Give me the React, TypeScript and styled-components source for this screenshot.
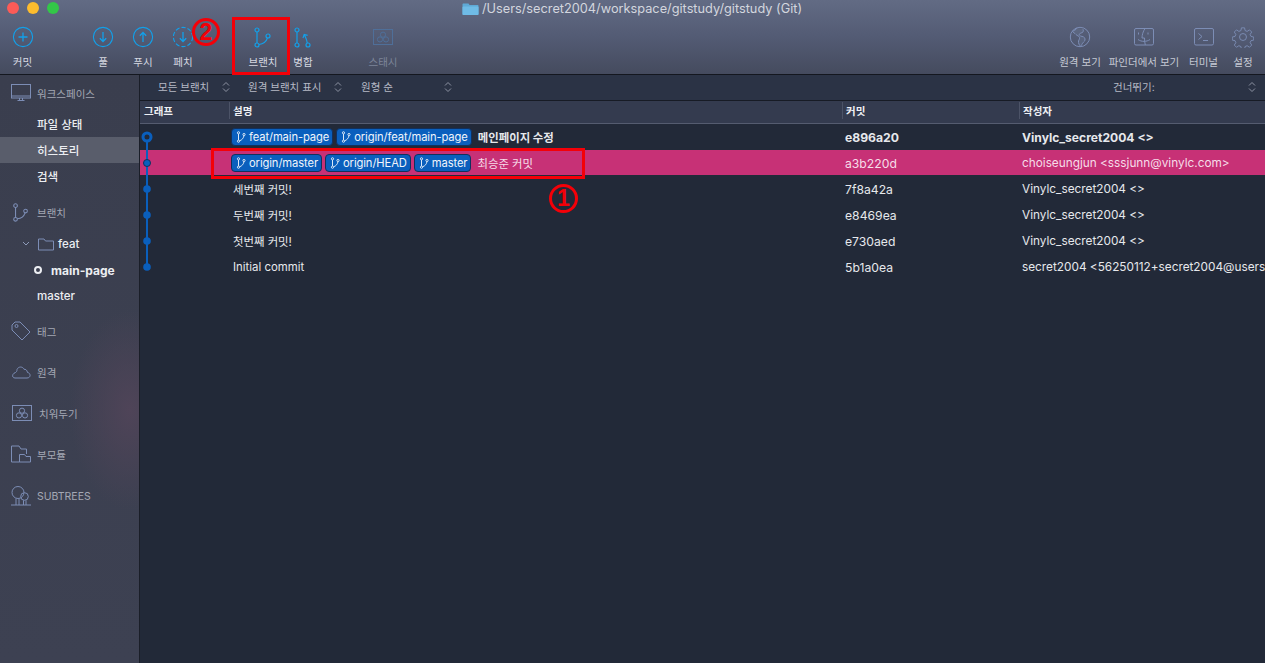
import React from 'react'
import styled, { createGlobalStyle } from 'styled-components'

const FONT = `"Inter", "Noto Sans CJK KR", "Liberation Sans", sans-serif`

const Global = createGlobalStyle`
  html, body { margin: 0; padding: 0; height: 100%; overflow: hidden; background: #222938; }
  * { box-sizing: border-box; }
  body { font-family: ${FONT}; }
`

const Window = styled.div`
  position: relative;
  width: 1265px;
  height: 663px;
  display: flex;
  flex-direction: column;
  overflow: hidden;
`

/* ---------- title + toolbar ---------- */
const Chrome = styled.header`
  height: 75px;
  flex: none;
  background: linear-gradient(#626b84 0%, #535b74 50%, #454b5e 100%);
  border-bottom: 1px solid #14171f;
  display: flex;
  flex-direction: column;
`
const TitleBar = styled.div`
  height: 18px;
  display: flex;
  align-items: center;
  position: relative;
  padding: 0 0 2px 7px;
  gap: 8px;
`
const Light = styled.span<{ $c: string }>`
  width: 12px;
  height: 12px;
  border-radius: 50%;
  background: ${p => p.$c};
`
const Title = styled.div`
  position: absolute;
  left: 462px;
  top: 0;
  height: 17px;
  display: flex;
  align-items: center;
  gap: 3px;
  font-size: 12.75px;
  color: #d3d6de;
  white-space: nowrap;
`
const Toolbar = styled.div`
  flex: 1;
  display: flex;
  align-items: flex-start;
  padding: 8px 4px 0 0;
`
const ToolGroup = styled.div<{ $w: number }>`
  width: ${p => p.$w}px;
  flex: none;
  display: flex;
  justify-content: center;
`
const Tool = styled.div<{ $w?: number; $dim?: boolean; $grey?: boolean }>`
  width: ${p => p.$w ?? 40}px;
  flex: none;
  display: flex;
  flex-direction: column;
  align-items: center;
  gap: 8px;
  font-size: 10.5px;
  line-height: 14px;
  white-space: nowrap;
  color: ${p => (p.$dim ? '#7d8599' : p.$grey ? '#c6cad4' : '#d5d8e0')};
  svg { display: block; height: 22px; }
`
const Spacer = styled.div`
  flex: 1;
`

/* ---------- body ---------- */
const Body = styled.div`
  flex: 1;
  min-height: 0;
  display: flex;
`
const Sidebar = styled.aside`
  width: 140px;
  flex: none;
  background:
    radial-gradient(60px 100px at 130px 335px, #4f4458 0%, rgba(79, 68, 88, 0) 100%),
    linear-gradient(#3a3e4e, #3d4152);
  border-right: 1px solid #1a1e28;
  padding-top: 5px;
  display: flex;
  flex-direction: column;
`
const SideHead = styled.div<{ $top?: number }>`
  height: 26px;
  margin-top: ${p => p.$top ?? 0}px;
  display: flex;
  align-items: center;
  gap: 6px;
  padding-left: 11px;
  font-size: 10.5px;
  color: #a4a8b4;
  svg { flex: none; }
`
const SideItem = styled.div<{ $active?: boolean; $bold?: boolean; $pad?: number; $top?: number }>`
  height: 26px;
  margin-top: ${p => p.$top ?? 0}px;
  display: flex;
  align-items: center;
  gap: 4px;
  padding-left: ${p => p.$pad ?? 37}px;
  font-size: ${p => (p.$bold ? 12 : 11.5)}px;
  font-weight: ${p => (p.$bold ? 700 : 500)};
  color: #eceef2;
  background: ${p => (p.$active ? '#595d6b' : 'transparent')};
`
const Ring = styled.span`
  width: 8px;
  height: 8px;
  margin-right: 5px;
  border-radius: 50%;
  border: 2px solid #eceef2;
`

const Main = styled.main`
  flex: 1;
  min-width: 0;
  display: flex;
  flex-direction: column;
  background: #222938;
`
const FilterBar = styled.div`
  height: 26px;
  flex: none;
  padding-bottom: 2px;
  background: #2b3345;
  border-bottom: 1px solid #171b25;
  display: flex;
  align-items: center;
  font-size: 10.5px;
  color: #b6bac6;
`
const Filter = styled.div<{ $w: number; $ml?: number; $mr?: number }>`
  width: ${p => p.$w}px;
  margin-left: ${p => p.$ml ?? 0}px;
  margin-right: ${p => p.$mr ?? 0}px;
  flex: none;
  display: flex;
  align-items: center;
  justify-content: space-between;
`
const Columns = '89px 613px 177px 1fr'
const HeadRow = styled.div`
  height: 23px;
  flex: none;
  display: grid;
  grid-template-columns: ${Columns};
  background: #343b4f;
  border-bottom: 1px solid #555c70;
  font-size: 10.5px;
  font-weight: 700;
  color: #eef0f4;
`
const HeadCell = styled.div<{ $first?: boolean }>`
  display: flex;
  align-items: center;
  padding-left: ${p => (p.$first ? 4 : 3)}px;
  border-left: ${p => (p.$first ? 'none' : '1px solid #4c5367')};
  margin: 1px 0 4px;
`
const Rows = styled.div`
  position: relative;
  flex: 1;
`
const Row = styled.div<{ $sel?: boolean; $bold?: boolean }>`
  height: 26px;
  display: grid;
  grid-template-columns: ${Columns};
  align-items: center;
  border-bottom: 1px solid transparent;
  background: ${p => (p.$sel ? '#c73176' : 'transparent')};
  background-clip: padding-box;
  color: ${p => (p.$sel ? '#f6dde9' : '#e6e8ec')};
  font-size: ${p => (p.$bold ? 12.1 : 11.8)}px;
  font-weight: ${p => (p.$bold ? 700 : 400)};
  white-space: nowrap;
`
const Desc = styled.div`
  display: flex;
  align-items: center;
  gap: 3px;
  padding-left: 2px;
  font-size: 11.4px;
  overflow: hidden;
`
const Plain = styled.span<{ $tagged?: boolean }>`
  margin-left: ${p => (p.$tagged ? 1 : 0)}px;
  padding-left: 2px;
`
const Tag = styled.span`
  height: 18px;
  display: inline-flex;
  align-items: center;
  gap: 3px;
  padding: 0 3px 0 4px;
  border-radius: 4px;
  background: #0a5fbd;
  border: 1px solid #12305c;
  color: #f0f5fb;
  font-size: 11.2px;
  font-weight: 400;
  letter-spacing: -0.1px;
`
const Cell = styled.div<{ $wide?: boolean }>`
  padding: 1px 0 0 3px;
  font-size: ${p => (p.$wide ? '12.2px' : 'inherit')};
  overflow: hidden;
`
const GraphSvg = styled.svg`
  position: absolute;
  left: 0;
  top: 0;
`

/* ---------- red annotations from the screenshot ---------- */
const RedBox = styled.div<{ $x: number; $y: number; $w: number; $h: number }>`
  position: absolute;
  left: ${p => p.$x}px;
  top: ${p => p.$y}px;
  width: ${p => p.$w}px;
  height: ${p => p.$h}px;
  border: 3px solid #f40008;
`
const Circled = styled.div<{ $x: number; $y: number; $size: number }>`
  position: absolute;
  left: ${p => p.$x}px;
  top: ${p => p.$y}px;
  width: ${p => p.$size}px;
  height: ${p => p.$size}px;
  border-radius: 50%;
  border: 3px solid #f40008;
  color: #f40008;
  display: flex;
  align-items: center;
  justify-content: center;
  font-family: "Liberation Sans", sans-serif;
  font-size: 23px;
  font-weight: 700;
  line-height: 1;
`

/* ---------- icons ---------- */
const BLUE = '#12a0ea'
const SLATE = '#7c8db5'

const CircleIcon = ({ arrow, dashed }: { arrow: 'plus' | 'down' | 'up'; dashed?: boolean }) => (
  <svg width="22" height="22" viewBox="0 0 22 22" fill="none" stroke={BLUE} strokeWidth="1.1">
    <circle cx="11" cy="11" r="9.6" strokeDasharray={dashed ? '4.2 2' : undefined} />
    {arrow === 'plus' && <path d="M11 6.5v9M6.5 11h9" strokeWidth="1.3" />}
    {arrow === 'down' && <path d="M11 6v9.5M7.8 12.2 11 15.5l3.2-3.3" strokeWidth="1.3" />}
    {arrow === 'up' && <path d="M11 16V6.5M7.8 9.8 11 6.5l3.2 3.3" strokeWidth="1.3" />}
  </svg>
)
const BranchIcon = ({ size = 22, color = BLUE }: { size?: number; color?: string }) => (
  <svg width={size} height={size} viewBox="0 0 22 22" fill="none" stroke={color} strokeWidth="1.2">
    <circle cx="5" cy="4" r="2" />
    <circle cx="5" cy="19" r="2" />
    <circle cx="16" cy="10" r="2" />
    <path d="M5 6v11M7 18.5c4.500-.5 7.500-3.500 8.500-6.600" />
  </svg>
)
const MergeIcon = () => (
  <svg width="22" height="22" viewBox="0 0 22 22" fill="none" stroke={BLUE} strokeWidth="1.2">
    <circle cx="5" cy="4" r="2" />
    <circle cx="5" cy="19" r="2" />
    <circle cx="16" cy="19" r="2" />
    <path d="M5 6v11M15.300 17.100C15 14 14 12 12.500 9M11 12l1.200-3.600 3.400 1" />
  </svg>
)
const StashIcon = ({ color = '#4f6f99' }: { color?: string }) => (
  <svg width="22" height="22" viewBox="0 0 22 22" fill="none" stroke={color} strokeWidth="1">
    <rect x="1.5" y="3.5" width="19" height="15" />
    <circle cx="11" cy="8.700" r="2.600" />
    <circle cx="8" cy="13.400" r="2.600" />
    <circle cx="14" cy="13.400" r="2.600" />
  </svg>
)
const GlobeIcon = () => (
  <svg width="22" height="22" viewBox="0 0 22 22" fill="none" stroke={SLATE} strokeWidth="1">
    <circle cx="11" cy="11" r="9.700" />
    <path d="M8 2c-1 2-3 2.500-4.500 3 .5 2 2.500 2 3.500 3.500s3 1 3.500 3-1.500 2.500-1 5 1.500 3.500 2 3.700c1.500-1 1.500-3 3-4s2-3 1-4.500-4-1-5-2.500 1-2 2.500-2.500 1.500-2.500 1-3.500" fill="#6a7796" fillOpacity=".35" />
  </svg>
)
const FinderIcon = () => (
  <svg width="22" height="22" viewBox="0 0 22 22" fill="none" stroke={SLATE} strokeWidth="1">
    <rect x="1.5" y="2.5" width="19" height="16.5" rx="1.5" />
    <path d="M12 2.500c-2 3-3 6.500-3 9.500h2.500c0 2.500.3 5 .8 7M5.500 6.500v2M15 6.500v2M5 13.500c3.500 2.500 8.500 2.500 12 0" />
  </svg>
)
const TerminalIcon = () => (
  <svg width="22" height="22" viewBox="0 0 22 22" fill="none" stroke={SLATE} strokeWidth="1">
    <rect x="1.5" y="2.5" width="19" height="16.5" rx="1.5" />
    <path d="M5.500 7.500 9 10.500l-3.500 3M10 14.500h5" />
  </svg>
)
const GearIcon = () => (
  <svg width="22" height="22" viewBox="0 0 24 24" fill="none" stroke={SLATE} strokeWidth="1">
    <circle cx="12" cy="12" r="3.800" />
    <path d="M10.300 2h3.400l.6 3 2.200.9 2.600-1.700 2.400 2.400-1.700 2.600.9 2.200 3 .6v3.400l-3 .6-.9 2.200 1.700 2.600-2.400 2.400-2.600-1.700-2.200.9-.6 3h-3.400l-.6-3-2.200-.9-2.600 1.700-2.400-2.400 1.700-2.600-.9-2.200-3-.6v-3.400l3-.6.9-2.200-1.700-2.600 2.400-2.400 2.600 1.700 2.200-.9z" />
  </svg>
)
const Monitor = () => (
  <svg width="20" height="20" viewBox="0 0 20 20" fill="none" stroke={SLATE} strokeWidth="1">
    <rect x=".5" y="1.5" width="19" height="13.5" />
    <path d="M.5 13h19M6.500 17.500h7M8.500 15v2.500M11.500 15v2.500" />
  </svg>
)
const TagIcon = () => (
  <svg width="20" height="20" viewBox="0 0 20 20" fill="none" stroke={SLATE} strokeWidth="1">
    <path d="M1 4 4 1h5l10 10-8 8L1 9z" />
    <circle cx="5.5" cy="5" r="1.5" />
  </svg>
)
const CloudIcon = () => (
  <svg width="20" height="20" viewBox="0 0 20 20" fill="none" stroke={SLATE} strokeWidth="1">
    <path d="M4 16h12c4 0 4-5 .5-5.500C16 8 14.500 7 13 7.300 12 4.500 7.500 4 6 7.500 6 9 5.500 10 4.500 10.500 1 11.500.5 16 4 16z" />
  </svg>
)
const FolderSvg = styled.svg`
  flex: none;
`
const FolderIcon = () => (
  <FolderSvg width="16" height="16" viewBox="0 0 16 16" fill="none" stroke={SLATE} strokeWidth="1">
    <path d="M.5 3h5.500l1.500 2h8v9H.5z" />
  </FolderSvg>
)
const SubmoduleIcon = () => (
  <svg width="20" height="20" viewBox="0 0 20 20" fill="none" stroke={SLATE} strokeWidth="1">
    <path d="M8.500 18H.5V2h7.500l2 3h5.500v5M8.500 10.500h5l1.500 2h4.500V18H8.500z" />
  </svg>
)
const TreeIcon = () => (
  <svg width="20" height="20" viewBox="0 0 20 20" fill="none" stroke={SLATE} strokeWidth="1">
    <circle cx="7" cy="6.5" r="6" />
    <circle cx="13.5" cy="10.5" r="3.8" />
    <path d="M0 19h20M5 12.500V19M8 12.500V19M12.500 14.300V19M15 14.300V19" />
  </svg>
)
const TagBranch = () => (
  <svg width="10" height="12" viewBox="0 0 10 12" fill="none" stroke="#dbe8f6" strokeWidth="1">
    <circle cx="2.5" cy="1.8" r="1.1" />
    <circle cx="2.5" cy="10.2" r="1.1" />
    <circle cx="8" cy="3.5" r="1.1" />
    <path d="M2.500 3v6M3.600 9.800C6 9 7.600 7 8 4.600" />
  </svg>
)
const Updown = () => (
  <svg width="8" height="12" viewBox="0 0 8 12" fill="none" stroke="#8d93a3" strokeWidth="1">
    <path d="M1 4.500 4 1.500l3 3M1 7.500l3 3 3-3" />
  </svg>
)
const ChevronSvg = styled.svg`
  margin-right: 4px;
`
const Chevron = () => (
  <ChevronSvg width="8" height="6" viewBox="0 0 8 6" fill="none" stroke="#8d9ab8" strokeWidth="1">
    <path d="M1 1l3 3 3-3" />
  </ChevronSvg>
)
const TitleFolder = () => (
  <svg width="17" height="14" viewBox="0 0 17 14">
    <path d="M.5 2.500c0-.6.400-1 1-1h5l1 1.500h8c.6 0 1 .4 1 1v8c0 .6-.4 1-1 1h-14c-.6 0-1-.4-1-1z" fill="#5fa9d6" />
    <rect x=".5" y="4.5" width="16" height="8.5" rx="1" fill="#6fbbe6" />
  </svg>
)

/* ---------- data ---------- */
interface Commit {
  tags?: string[]
  text: string
  hash: string
  author: string
  sel?: boolean
  bold?: boolean
}
const commits: Commit[] = [
  { tags: ['feat/main-page', 'origin/feat/main-page'], text: '메인페이지 수정', hash: 'e896a20', author: 'Vinylc_secret2004 <>', bold: true },
  { tags: ['origin/master', 'origin/HEAD', 'master'], text: '최승준 커밋', hash: 'a3b220d', author: 'choiseungjun <sssjunn@vinylc.com>', sel: true },
  { text: '세번째 커밋!', hash: '7f8a42a', author: 'Vinylc_secret2004 <>' },
  { text: '두번째 커밋!', hash: 'e8469ea', author: 'Vinylc_secret2004 <>' },
  { text: '첫번째 커밋!', hash: 'e730aed', author: 'Vinylc_secret2004 <>' },
  { text: 'Initial commit', hash: '5b1a0ea', author: 'secret2004 <56250112+secret2004@users' },
]

const Graph = () => (
  <GraphSvg width="20" height="156" viewBox="0 0 20 156" fill="#0a5fbd">
    <path d="M7 13v130" stroke="#0a5fbd" strokeWidth="2" />
    <circle cx="7" cy="13" r="4" fill="#222938" stroke="#0a5fbd" strokeWidth="3" />
    <circle cx="7" cy="39" r="3.5" stroke="#12305c" strokeWidth="1" />
    <circle cx="7" cy="65" r="3.8" />
    <circle cx="7" cy="91" r="3.8" />
    <circle cx="7" cy="117" r="3.8" />
    <circle cx="7" cy="143" r="3.8" />
  </GraphSvg>
)

export default function App() {
  return (
    <Window>
      <Global />
      <Chrome>
        <TitleBar>
          <Light $c="#fc5b57" />
          <Light $c="#fdbc2e" />
          <Light $c="#33c748" />
          <Title>
            <TitleFolder />
            /Users/secret2004/workspace/gitstudy/gitstudy (Git)
          </Title>
        </TitleBar>
        <Toolbar>
          <ToolGroup $w={45}>
            <Tool><CircleIcon arrow="plus" />커밋</Tool>
          </ToolGroup>
          <ToolGroup $w={38} />
          <ToolGroup $w={120}>
            <Tool><CircleIcon arrow="down" />풀</Tool>
            <Tool><CircleIcon arrow="up" />푸시</Tool>
            <Tool><CircleIcon arrow="down" dashed />페치</Tool>
          </ToolGroup>
          <ToolGroup $w={40} />
          <ToolGroup $w={80}>
            <Tool><BranchIcon />브랜치</Tool>
            <Tool><MergeIcon />병합</Tool>
          </ToolGroup>
          <ToolGroup $w={40} />
          <Tool $dim><StashIcon />스태시</Tool>
          <Spacer />
          <Tool $w={52} $grey><GlobeIcon />원격 보기</Tool>
          <Tool $w={76} $grey><FinderIcon />파인더에서 보기</Tool>
          <Tool $w={43} $grey><TerminalIcon />터미널</Tool>
          <Tool $w={36} $grey><GearIcon />설정</Tool>
        </Toolbar>
      </Chrome>
      <Body>
        <Sidebar>
          <SideHead><Monitor />워크스페이스</SideHead>
          <SideItem $top={5}>파일 상태</SideItem>
          <SideItem $active>히스토리</SideItem>
          <SideItem>검색</SideItem>
          <SideHead $top={10}><BranchIcon size={20} color={SLATE} />브랜치</SideHead>
          <SideItem $pad={22} $top={6}><Chevron /><FolderIcon />feat</SideItem>
          <SideItem $pad={34} $bold><Ring />main-page</SideItem>
          <SideItem>master</SideItem>
          <SideHead $top={9}><TagIcon />태그</SideHead>
          <SideHead $top={15}><CloudIcon />원격</SideHead>
          <SideHead $top={15}><StashIcon color={SLATE} />치워두기</SideHead>
          <SideHead $top={15}><SubmoduleIcon />부모듈</SideHead>
          <SideHead $top={16}><TreeIcon />SUBTREES</SideHead>
        </Sidebar>
        <Main>
          <FilterBar>
            <Filter $w={72} $ml={18}>모든 브랜치<Updown /></Filter>
            <Filter $w={94} $ml={18}>원격 브랜치 표시<Updown /></Filter>
            <Filter $w={91} $ml={19}>원형 순<Updown /></Filter>
            <Spacer />
            <Filter $w={143} $mr={9}>건너뛰기:<Updown /></Filter>
          </FilterBar>
          <HeadRow>
            <HeadCell $first>그래프</HeadCell>
            <HeadCell>설명</HeadCell>
            <HeadCell>커밋</HeadCell>
            <HeadCell>작성자</HeadCell>
          </HeadRow>
          <Rows>
            <Graph />
            {commits.map(c => (
              <Row key={c.hash} $sel={c.sel} $bold={c.bold}>
                <span />
                <Desc>
                  {c.tags?.map(t => (
                    <Tag key={t}><TagBranch />{t}</Tag>
                  ))}
                  <Plain $tagged={!!c.tags}>{c.text}</Plain>
                </Desc>
                <Cell $wide>{c.hash}</Cell>
                <Cell>{c.author}</Cell>
              </Row>
            ))}
          </Rows>
        </Main>
      </Body>
      <RedBox $x={232} $y={17} $w={58} $h={58} />
      <RedBox $x={211} $y={148} $w={374} $h={31} />
      <Circled $x={192} $y={18} $size={28}>2</Circled>
      <Circled $x={549} $y={184} $size={29}>1</Circled>
    </Window>
  )
}
